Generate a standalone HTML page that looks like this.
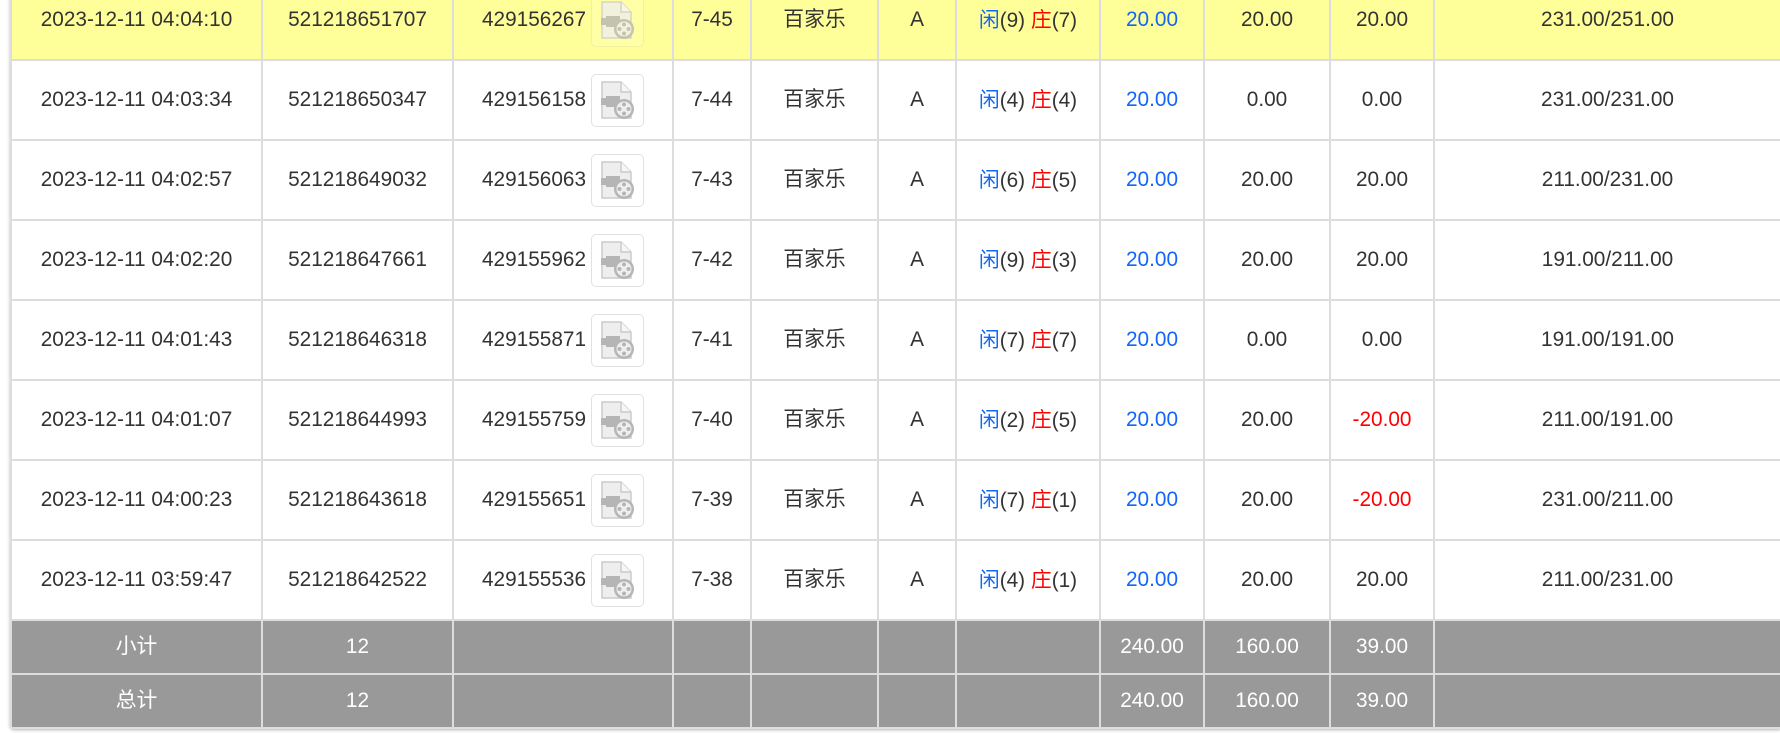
<!DOCTYPE html>
<html><head><meta charset="utf-8"><style>
html,body{margin:0;padding:0;background:#fff;width:1780px;height:733px;overflow:hidden}
.wrap{position:absolute;left:10px;top:-21px;width:1772px;border-radius:4px;box-shadow:0 1px 3px rgba(0,0,0,.3);overflow:hidden}
table{border-collapse:collapse;table-layout:fixed;width:1772px;font-family:"Liberation Sans","Noto Sans CJK SC",sans-serif;font-size:20.8px;color:#333}
td{border:2.5px solid #ddd;text-align:center;vertical-align:middle;height:78px;padding:0;white-space:nowrap;line-height:24px}
td span,td{line-height:24px}
.c{display:inline-block;vertical-align:top;line-height:22px;position:relative;top:1px}
tr.y td{background:#ffff99}
tr.f td{background:#999;color:#fff;height:52px}
.b{color:#1166f5}.r{color:#f00}
.n{display:flex;align-items:center;justify-content:center}
.ic{display:inline-block;width:51px;height:51px;border:1px solid #e2e2e2;border-radius:5px;margin-left:5px;position:relative;background:rgba(255,255,255,.35)}
.ic svg{position:absolute;left:8px;top:6px}
tr.y .ic{background:#ffffa8;border-color:#eeeea0;opacity:.8}
</style></head><body><div class="wrap"><table>
<colgroup><col style="width:251px"><col style="width:191px"><col style="width:220px"><col style="width:78px"><col style="width:127px"><col style="width:78px"><col style="width:144px"><col style="width:104px"><col style="width:126px"><col style="width:104px"><col></colgroup>
<tbody id="tb"></tbody></table></div>
<script>
var icon='<span class="ic"><svg width="36" height="40" viewBox="0 0 36 40"><path d="M2 1h19l10 10v26H2z" fill="#eee" stroke="#ccc" stroke-width="1.5"/><path d="M21 1v10h10" fill="#f6f6f6" stroke="#ccc" stroke-width="1.5"/><rect x="6" y="15" width="14" height="11" fill="#b5b5b5"/><path d="M1 17h6v7H1z" fill="#b5b5b5"/><circle cx="24" cy="28" r="10" fill="#b5b5b5"/><circle cx="24" cy="28" r="7.5" fill="#eee"/><g fill="#b5b5b5"><circle cx="24" cy="23.5" r="2"/><circle cx="24" cy="32.5" r="2"/><circle cx="19.5" cy="28" r="2"/><circle cx="28.5" cy="28" r="2"/></g></svg></span>';
var d=[["2023-12-11 04:04:10","521218651707","429156267","7-45",9,7,"20.00","20.00","20.00","231.00/251.00"],
["2023-12-11 04:03:34","521218650347","429156158","7-44",4,4,"20.00","0.00","0.00","231.00/231.00"],
["2023-12-11 04:02:57","521218649032","429156063","7-43",6,5,"20.00","20.00","20.00","211.00/231.00"],
["2023-12-11 04:02:20","521218647661","429155962","7-42",9,3,"20.00","20.00","20.00","191.00/211.00"],
["2023-12-11 04:01:43","521218646318","429155871","7-41",7,7,"20.00","0.00","0.00","191.00/191.00"],
["2023-12-11 04:01:07","521218644993","429155759","7-40",2,5,"20.00","20.00","-20.00","211.00/191.00"],
["2023-12-11 04:00:23","521218643618","429155651","7-39",7,1,"20.00","20.00","-20.00","231.00/211.00"],
["2023-12-11 03:59:47","521218642522","429155536","7-38",4,1,"20.00","20.00","20.00","211.00/231.00"]];
var h="";
d.forEach(function(r,i){h+='<tr'+(i==0?' class="y"':'')+'><td>'+r[0]+'</td><td>'+r[1]+'</td><td><div class="n">'+r[2]+icon+'</div></td><td>'+r[3]+'</td><td><span class="c">百家乐</span></td><td>A</td><td><span class="c"><span class="b">闲</span>('+r[4]+') <span class="r">庄</span>('+r[5]+')</span></td><td class="b">'+r[6]+'</td><td>'+r[7]+'</td><td'+(r[8][0]=='-'?' class="r"':'')+'>'+r[8]+'</td><td>'+r[9]+'</td></tr>';});
["小计","总计"].forEach(function(n){h+='<tr class="f"><td><span class="c">'+n+'</span></td><td>12</td><td></td><td></td><td></td><td></td><td></td><td>240.00</td><td>160.00</td><td>39.00</td><td></td></tr>';});
document.getElementById("tb").innerHTML=h;
</script></body></html>
